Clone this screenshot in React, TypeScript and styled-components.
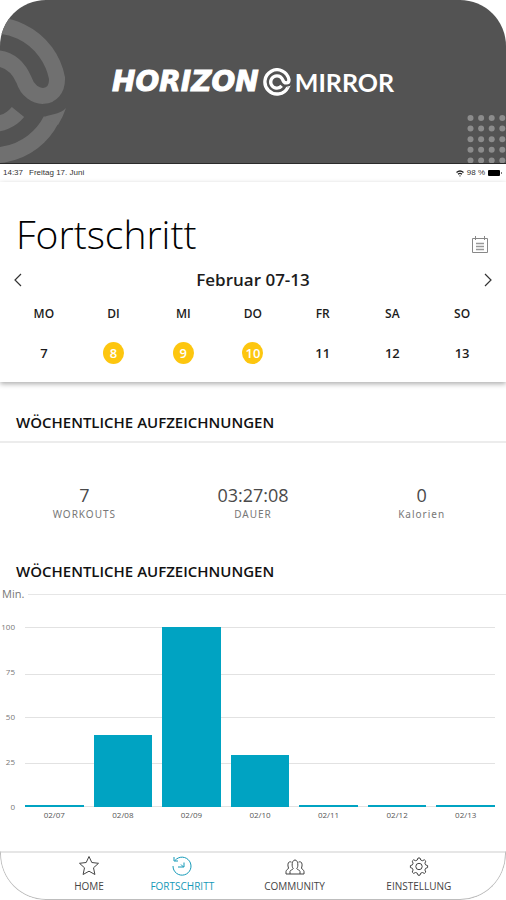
import React from "react";
import styled, { createGlobalStyle } from "styled-components";

const GlobalStyle = createGlobalStyle`
  *, *::before, *::after { box-sizing: border-box; }
  body { margin: 0; background: #fff; font-family: "Open Sans", "Noto Sans", sans-serif; color: #1c1c1c; }
  h1, h2, p { margin: 0; }
  button { border: 0; padding: 0; background: none; font: inherit; color: inherit; cursor: pointer; }
`;

const Screen = styled.div`
  display: flex;
  flex-direction: column;
  min-height: 100vh;
  overflow: hidden;
  background: #fff;
  border-radius: 46px;
`;

const Banner = styled.header`
  position: relative;
  display: flex;
  align-items: center;
  justify-content: center;
  gap: 4px;
  height: 164px;
  overflow: hidden;
  background: #535353;
  border-bottom: 1px solid #2b2b2b;
  color: #fff;
`;

const BrandName = styled.span`
  font: italic 700 28px/32px "DejaVu Sans", sans-serif;
  -webkit-text-stroke: 1px #fff;
`;

const BrandProduct = styled.span`
  font: 700 25px/32px Lato, sans-serif;
`;

const Watermark = styled.div`
  position: absolute;
  left: -82px;
  top: 16px;
  color: #707070;
`;

const Dots = styled.svg`
  position: absolute;
  right: 0;
  bottom: 0;
`;

const StatusBar = styled.div`
  display: flex;
  align-items: center;
  justify-content: space-between;
  height: 18px;
  padding: 0 4px 0 3px;
  font: 400 8px/10px "Liberation Sans", sans-serif;
  color: #333;
`;

const StatusGroup = styled.div<{ $gap: number }>`
  display: flex;
  align-items: center;
  gap: ${(p) => p.$gap}px;
`;

const WeekPanel = styled.section`
  padding-bottom: 16px;
  box-shadow: 0 2px 5px rgba(0, 0, 0, 0.32);
`;

const TitleRow = styled.div`
  display: flex;
  align-items: flex-end;
  justify-content: space-between;
  padding: 26px 17px 0 16px;
`;

const Title = styled.h1`
  font: 350 39px/52px "Open Sans", sans-serif;
  color: #000;
`;

const IconButton = styled.button`
  display: flex;
  align-items: center;
  justify-content: center;
`;

const CalendarButton = styled(IconButton)`
  margin-bottom: 6px;
`;

const WeekNav = styled.div`
  display: flex;
  align-items: center;
  justify-content: space-between;
  height: 34px;
  padding: 6px 12px 0;
`;

const WeekLabel = styled.p`
  font: 600 17px/24px "Open Sans", sans-serif;
`;

const WeekTable = styled.table`
  width: calc(100% - 18px);
  margin: 2px 9px 0;
  table-layout: fixed;
  border-collapse: collapse;
  text-align: center;

  th, td { padding: 0; }
  th { height: 36px; font: 600 12px/16px "Open Sans", sans-serif; }
  td { height: 34px; padding-top: 6px; vertical-align: middle; }
`;

const Day = styled.button<{ $active: boolean }>`
  width: 21px;
  height: 22px;
  border-radius: 50%;
  font: 600 13px/22px "Open Sans", sans-serif;
  background: ${(p) => (p.$active ? "#fdc60f" : "transparent")};
  color: ${(p) => (p.$active ? "#fff" : "#1c1c1c")};
`;

const SectionTitle = styled.h2`
  padding: 0 16px;
  font: 600 15px/20px "Open Sans", sans-serif;
  color: #111;
`;

const Records = styled.section`
  padding-top: 30px;
`;

const Stats = styled.dl`
  display: grid;
  grid-template-columns: repeat(3, 1fr);
  margin: 9px 0 0;
  padding: 41px 0 39px;
  border-top: 2px solid #ececec;
  text-align: center;
`;

const Stat = styled.div`
  display: flex;
  flex-direction: column-reverse;
`;

const StatValue = styled.dd`
  margin: 0;
  font: 400 18px/22px "Open Sans", sans-serif;
  color: #4a4a4a;
`;

const StatLabel = styled.dt`
  font: 400 10px/16px "Noto Sans", sans-serif;
  letter-spacing: 1px;
  color: #777;
`;

const ChartHead = styled.div`
  display: flex;
  align-items: center;
  gap: 4px;
  padding: 5px 0 0 2px;
  font: 400 11px/16px "Open Sans", sans-serif;
  color: #777;

  &::after { content: ""; flex: 1; height: 1px; background: #e6e6e6; }
`;

const Chart = styled.div`
  display: grid;
  grid-template-columns: 15px 1fr;
  column-gap: 10px;
  padding: 25px 11px 0 0;
`;

const Scale = styled.div`
  display: flex;
  flex-direction: column;
  justify-content: space-between;
  margin: -5px 0;
  text-align: right;
  font: 400 8px/10px "Open Sans", sans-serif;
  color: #777;
`;

const Plot = styled.div`
  display: grid;
  grid-template-rows: 180px;
`;

const Lines = styled.div`
  grid-area: 1 / 1;
  display: grid;
  grid-template-rows: 47px 43px 46px 43px;
  border-bottom: 1px solid #e2e2e2;

  i { border-top: 1px solid #e2e2e2; }
`;

const Bars = styled.div`
  grid-area: 1 / 1;
  display: grid;
  grid-template-columns: repeat(7, 1fr);
  column-gap: 10px;
  align-items: end;
`;

const Bar = styled.div`
  min-height: 2px;
  background: #00a3c2;
`;

const Dates = styled.div`
  grid-column: 2;
  display: grid;
  grid-template-columns: repeat(7, 1fr);
  column-gap: 10px;
  padding-top: 3px;
  text-align: center;
  font: 400 8px/10px "Open Sans", sans-serif;
  color: #555;
`;

const TabBar = styled.nav`
  display: grid;
  grid-template-columns: 74fr 112fr 112fr 136fr;
  height: 49px;
  margin-top: auto;
  padding: 0 18px 0 51px;
  border: 1px solid #bdbdbd;
  border-top: 2px solid #e6e6e6;
  border-radius: 0 0 46px 46px;
`;

const Tab = styled.a<{ $active?: boolean }>`
  display: flex;
  flex-direction: column;
  align-items: center;
  gap: 2px;
  padding-top: 2px;
  font: 400 10px/14px "Open Sans", sans-serif;
  text-decoration: none;
  color: ${(p) => (p.$active ? "#1499b8" : "#444")};
`;

const Emblem = ({ size, weight }: { size: number; weight: number }) => (
  <svg width={size} height={size} viewBox="-82 16 150 150" fill="none" stroke="currentColor" strokeWidth={weight} aria-hidden="true" display="block">
    <path d="M51 120A65 65 0 1 1 57 78C58 101 31 102 24 80C18 66 8 58-7 58A33 33 0 1 0 18 112" />
    <path d="M66 108C61 114 51 114 44 117L58 125Q63 117 66 108z" fill="currentColor" stroke="none" />
  </svg>
);

const Chevron = ({ d }: { d: string }) => (
  <svg width="12" height="14" viewBox="0 0 12 14" fill="none" stroke="#333" strokeWidth="1.2" aria-hidden="true">
    <path d={d} />
  </svg>
);

const CalendarIcon = () => (
  <svg width="18" height="18" viewBox="0 0 18 18" fill="none" stroke="#888" aria-hidden="true">
    <path d="M1.5 2.5h15v14h-15zM4.5 0v4M13.5 0v4" />
    <path d="M5 7.5h8M5 10.5h8M5 13.5h8" stroke="#999" strokeWidth="1.5" />
  </svg>
);

const TabIcon = ({ children }: { children: React.ReactNode }) => (
  <svg width="22" height="22" viewBox="0 0 22 22" fill="none" stroke="currentColor" strokeWidth="1" strokeLinejoin="round" aria-hidden="true">
    {children}
  </svg>
);

const days = [
  { name: "MO", day: 7 },
  { name: "DI", day: 8, active: true },
  { name: "MI", day: 9, active: true },
  { name: "DO", day: 10, active: true },
  { name: "FR", day: 11 },
  { name: "SA", day: 12 },
  { name: "SO", day: 13 },
];

const stats = [
  { value: "7", label: "WORKOUTS" },
  { value: "03:27:08", label: "DAUER" },
  { value: "0", label: "Kalorien" },
];

const minutes = [
  { date: "02/07", value: 0 },
  { date: "02/08", value: 40 },
  { date: "02/09", value: 100 },
  { date: "02/10", value: 29 },
  { date: "02/11", value: 0 },
  { date: "02/12", value: 0 },
  { date: "02/13", value: 0 },
];

const tabs = [
  {
    label: "HOME",
    icon: <path d="M11 1.5l2.8 6 6.7.8-5 4.5 1.4 6.7-5.9-3.3-5.9 3.3 1.4-6.7-5-4.5 6.7-.8z" />,
  },
  {
    label: "FORTSCHRITT",
    active: true,
    icon: (
      <>
        <path d="M4 5.5A9 9 0 1 1 2 11" />
        <path d="M3 2v4h4M13 7.5v4.5H7M10 9.5l2.5 2.5" />
      </>
    ),
  },
  {
    label: "COMMUNITY",
    icon: (
      <>
        <path d="M6 19v-2.5c0-1.6 3-1.6 3.2-3C7.5 12 7.7 5 11 5s3.5 7 1.8 8.5c.2 1.4 3.2 1.4 3.2 3V19z" />
        <path d="M7.5 7.2C4.5 5.5 3 9 4.5 13c0 1.5-2.5 1.5-2.5 3.5V19h4M14.5 7.2C17.5 5.5 19 9 17.5 13c0 1.5 2.5 1.5 2.5 3.5V19h-4" />
      </>
    ),
  },
  {
    label: "EINSTELLUNG",
    icon: (
      <>
        <path d="M9.3 5l.7-2h2l.7 2 1.7.7 2-.9 1.4 1.4-.9 2 .7 1.7 2 .7v2l-2 .7-.7 1.7.9 2-1.4 1.4-2-.9-1.7.7-.7 2h-2l-.7-2-1.7-.7-2 .9-1.4-1.4.9-2-.7-1.7-2-.7v-2l2-.7.7-1.7-.9-2 1.4-1.4 2 .9z" />
        <circle cx="11" cy="11.5" r="3.2" />
      </>
    ),
  },
];

export default function App() {
  return (
    <Screen>
      <GlobalStyle />
      <Banner>
        <Watermark>
          <Emblem size={150} weight={16} />
        </Watermark>
        <BrandName>HORIZON</BrandName>
        <Emblem size={28} weight={18} />
        <BrandProduct>MIRROR</BrandProduct>
        <Dots width="39" height="49" fill="#8c8c8c" aria-hidden="true">
          {[0, 1, 2, 3, 4].map((row) =>
            [0, 1, 2, 3].map((col) => (
              <circle key={`${row}-${col}`} cx={3.5 + col * 10.6} cy={4 + row * 10.6} r="3" />
            ))
          )}
        </Dots>
      </Banner>

      <StatusBar>
        <StatusGroup $gap={6}>
          <span>14:37</span>
          <span>Freitag 17. Juni</span>
        </StatusGroup>
        <StatusGroup $gap={3}>
          <svg width="8" height="7" viewBox="0 0 8 7" fill="none" stroke="#222" strokeWidth="1.3" aria-hidden="true">
            <path d="M.5 2.5Q4-.5 7.5 2.5M2 4.3Q4 2.5 6 4.3M3.5 5.8h1" />
          </svg>
          <span>98 %</span>
          <svg width="14" height="6" viewBox="0 0 14 6" aria-hidden="true">
            <rect width="12" height="6" rx="1" />
            <rect x="13" y="2" width="1" height="2" fill="#777" />
          </svg>
        </StatusGroup>
      </StatusBar>

      <WeekPanel>
        <TitleRow>
          <Title>Fortschritt</Title>
          <CalendarButton aria-label="Kalender">
            <CalendarIcon />
          </CalendarButton>
        </TitleRow>
        <WeekNav>
          <IconButton aria-label="Vorherige Woche">
            <Chevron d="M9 1L3 7l6 6" />
          </IconButton>
          <WeekLabel>Februar 07-13</WeekLabel>
          <IconButton aria-label="Nächste Woche">
            <Chevron d="M3 1l6 6-6 6" />
          </IconButton>
        </WeekNav>
        <WeekTable>
          <thead>
            <tr>
              {days.map((d) => (
                <th key={d.name} scope="col">{d.name}</th>
              ))}
            </tr>
          </thead>
          <tbody>
            <tr>
              {days.map((d) => (
                <td key={d.day}>
                  <Day $active={!!d.active}>{d.day}</Day>
                </td>
              ))}
            </tr>
          </tbody>
        </WeekTable>
      </WeekPanel>

      <Records>
        <SectionTitle>WÖCHENTLICHE AUFZEICHNUNGEN</SectionTitle>
        <Stats>
          {stats.map((s) => (
            <Stat key={s.label}>
              <StatLabel>{s.label}</StatLabel>
              <StatValue>{s.value}</StatValue>
            </Stat>
          ))}
        </Stats>
      </Records>

      <section>
        <SectionTitle>WÖCHENTLICHE AUFZEICHNUNGEN</SectionTitle>
        <ChartHead>Min.</ChartHead>
        <Chart>
          <Scale>
            {[100, 75, 50, 25, 0].map((n) => (
              <span key={n}>{n}</span>
            ))}
          </Scale>
          <Plot>
            <Lines>
              <i />
              <i />
              <i />
              <i />
            </Lines>
            <Bars>
              {minutes.map((m) => (
                <Bar key={m.date} style={{ height: `${m.value}%` }} />
              ))}
            </Bars>
          </Plot>
          <Dates>
            {minutes.map((m) => (
              <span key={m.date}>{m.date}</span>
            ))}
          </Dates>
        </Chart>
      </section>

      <TabBar>
        {tabs.map((t) => (
          <Tab key={t.label} href={`#${t.label.toLowerCase()}`} $active={t.active} aria-current={t.active ? "page" : undefined}>
            <TabIcon>{t.icon}</TabIcon>
            {t.label}
          </Tab>
        ))}
      </TabBar>
    </Screen>
  );
}
